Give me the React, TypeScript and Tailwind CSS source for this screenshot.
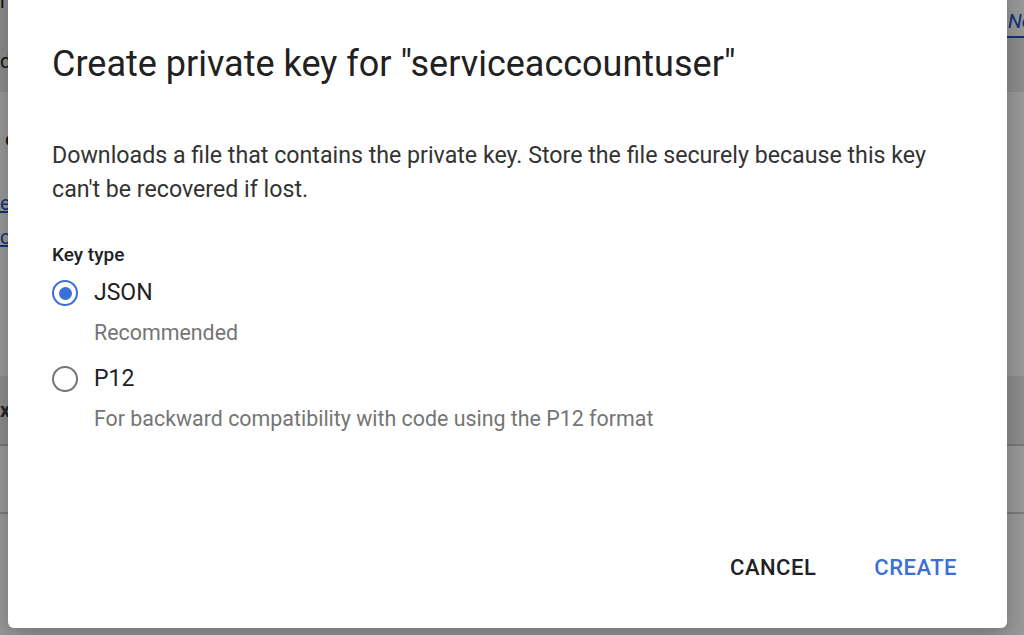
import { useState } from "react"

function Radio({ checked }: { checked: boolean }) {
  return (
    <span
      className={`flex h-[26px] w-[26px] shrink-0 items-center justify-center rounded-full border-[2.5px] ${
        checked ? "border-[#3b6fd8]" : "border-[#757575]"
      }`}>
      {checked && <span className="h-[13px] w-[13px] rounded-full bg-[#3b6fd8]" />}
    </span>
  )
}

function BackgroundPage() {
  return (
    <div className="flex h-full w-full flex-col bg-white text-[20px] text-[#202124]">
      <div className="flex h-[92px] justify-between">
        <div className="flex w-[200px] flex-col bg-[#ececec]">
          <span className="-mt-[12px] leading-[26px]">r</span>
          <span className="mt-[34px] leading-[26px]">d</span>
        </div>
        <div className="flex w-[200px] flex-col items-end">
          <div className="flex h-[38px] w-full items-end justify-end border-b-2 border-[#1a57c9] bg-white">
            <span className="mr-[-8px] italic leading-[30px] text-[#1a57c9]">Ne</span>
          </div>
          <div className="w-full flex-1 bg-[#ececec]" />
        </div>
      </div>
      <div className="flex flex-col pl-[5px] pt-[34px]">
        <span className="leading-[26px]">e</span>
        <span className="mt-[38px] -ml-[5px] leading-[26px] text-[#1a57c9] underline">es</span>
        <span className="mt-[8px] -ml-[5px] leading-[26px] text-[#1a57c9] underline">co</span>
      </div>
      <div className="mt-[126px] flex h-[70px] items-center border-b-2 border-[#c8c8c8] bg-[#ececec]">
        <span className="font-bold text-[#3c4043]">x</span>
      </div>
      <div className="h-[68px] border-b-2 border-[#cfcfcf]" />
    </div>
  )
}

export default function App() {
  const [keyType, setKeyType] = useState("JSON")

  return (
    <div
      className="relative h-[635px] w-[1024px] overflow-hidden"
      style={{ fontFamily: "Roboto, 'Noto Sans', sans-serif" }}>
      <BackgroundPage />
      <div className="absolute inset-0 bg-black/40" />

      <div className="absolute left-[8px] top-[-20px] flex h-[648px] w-[999px] flex-col rounded-md bg-white pl-[44px] pr-[42px] shadow-[0_8px_24px_rgba(0,0,0,0.25)]">
        <h1 className="mt-[62px] text-[36px] leading-[44px] text-[#212121]">
          Create private key for "serviceaccountuser"
        </h1>

        <p className="mt-[52px] text-[23.2px] leading-[34px] text-[#333333]">
          Downloads a file that contains the private key. Store the file securely because this key
          can't be recovered if lost.
        </p>

        <div className="mt-[36px] text-[19px] font-medium leading-[26px] text-[#202124]">Key type</div>

        <div className="mt-[10px] flex flex-col">
          <button className="flex items-center gap-[16px] text-left" onClick={() => setKeyType("JSON")}>
            <Radio checked={keyType === "JSON"} />
            <span className="text-[23px] leading-[30px] text-[#212121]">JSON</span>
          </button>
          <div className="ml-[42px] mt-[11px] text-[21.4px] leading-[28px] text-[#757575]">Recommended</div>

          <button className="mt-[17px] flex items-center gap-[16px] text-left" onClick={() => setKeyType("P12")}>
            <Radio checked={keyType === "P12"} />
            <span className="text-[23px] leading-[30px] text-[#212121]">P12</span>
          </button>
          <div className="ml-[42px] mt-[11px] text-[21.4px] leading-[28px] text-[#757575]">
            For backward compatibility with code using the P12 format
          </div>
        </div>

        <div className="mt-auto mb-[40px] flex justify-end gap-[42px]">
          <button className="px-[8px] py-[6px] text-[22px] font-medium uppercase leading-[28px] tracking-[0.5px] text-[#202124]">
            Cancel
          </button>
          <button className="px-[8px] py-[6px] text-[22px] font-medium uppercase leading-[28px] tracking-[0.5px] text-[#3b6fd8]">
            Create
          </button>
        </div>
      </div>
    </div>
  )
}
